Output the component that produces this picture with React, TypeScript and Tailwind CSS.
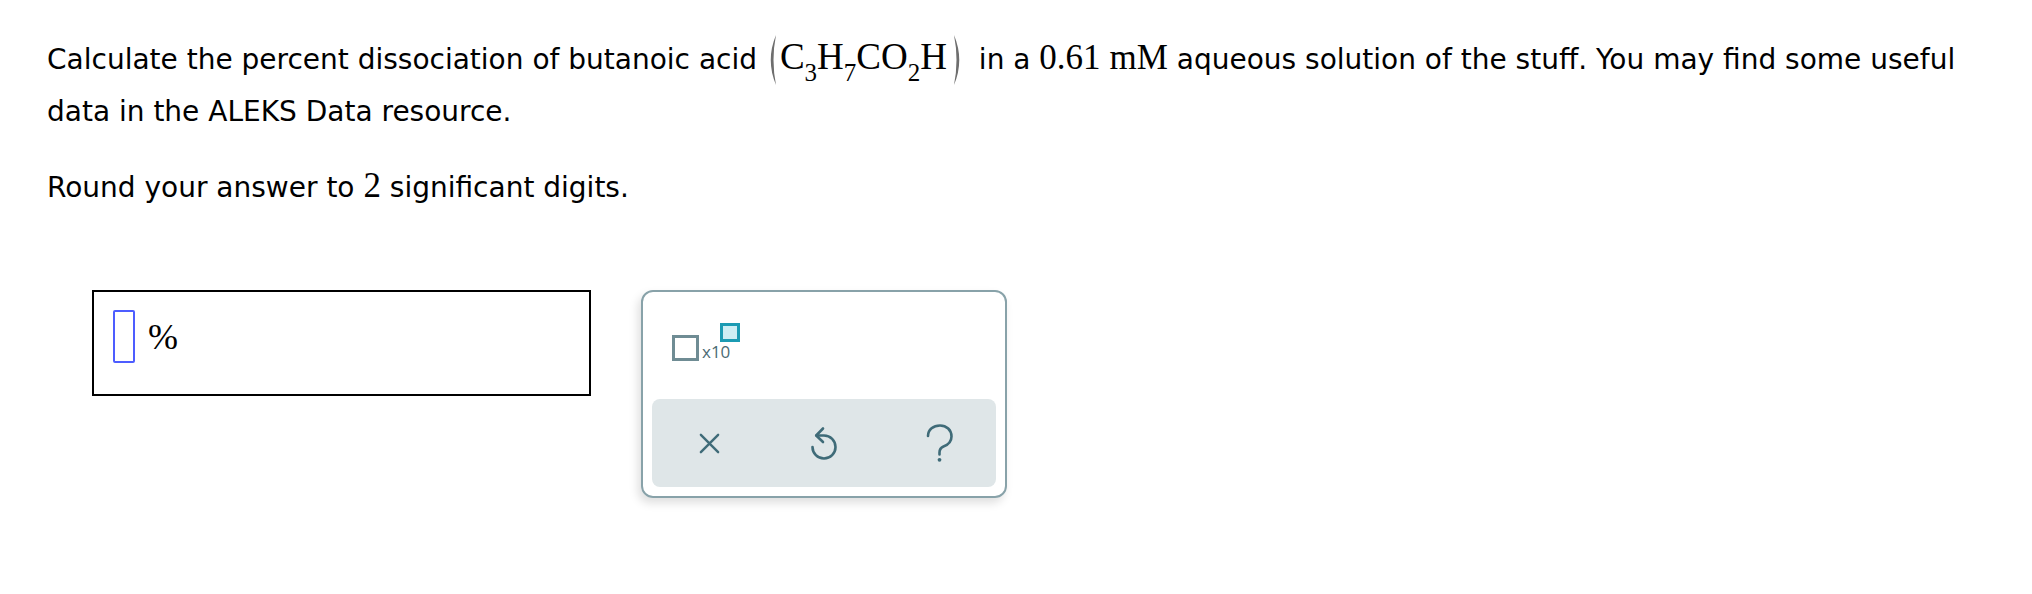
import React from "react";

function Paren({ right = false }: { right?: boolean }) {
  return (
    <svg
      viewBox="0 0 12 52"
      className={`inline-block w-[12px] h-[52px] align-[-17px] ${right ? "ml-[5px] mr-[6px]" : "mr-[2px]"}`}
    >
      {right ? (
        <path d="M2 1 Q12.5 26 2 51 Q7 26 2 1 Z" fill="#6e6e6e" />
      ) : (
        <path d="M10 1 Q-0.5 26 10 51 Q5 26 10 1 Z" fill="#6e6e6e" />
      )}
    </svg>
  );
}

function Sub({ children }: { children: React.ReactNode }) {
  return <span className="text-[25px] relative top-[12px]">{children}</span>;
}

function Formula() {
  return (
    <span className="font-['Liberation_Serif',serif] text-[37px] leading-none whitespace-nowrap">
      <Paren />
      C<Sub>3</Sub>H<Sub>7</Sub>CO<Sub>2</Sub>H
      <Paren right />
    </span>
  );
}

function M({ children }: { children: React.ReactNode }) {
  return <span className="font-['Liberation_Serif',serif] text-[35px] leading-none">{children}</span>;
}

function XIcon() {
  return (
    <svg viewBox="0 0 24 24" className="w-[25px] h-[23px]" fill="none" stroke="#3f6b78" strokeWidth="2.5" strokeLinecap="round">
      <path d="M3 3 L21 21 M21 3 L3 21" />
    </svg>
  );
}

function UndoIcon() {
  return (
    <svg viewBox="0 0 28 36" className="w-[28px] h-[36px]" fill="none" stroke="#3f6b78" strokeWidth="2.6" strokeLinecap="round" strokeLinejoin="round">
      <path d="M6.5 10.5 L14 10.5 A11.5 11.5 0 1 1 2.5 22" />
      <path d="M13 3.5 L6.2 10.5 L13 17" />
    </svg>
  );
}

function HelpIcon() {
  return (
    <svg viewBox="0 0 28 38" className="w-[28px] h-[38px]" fill="none" stroke="#3f6b78" strokeWidth="2.6" strokeLinecap="round">
      <path d="M3 12 C3 5.5 8.5 1.5 15 1.5 C21.5 1.5 26.5 6 26.5 12.5 C26.5 18 22.5 21 18.5 22.5 C15.5 23.8 14.5 25.5 14.5 28.5 V30.5" />
      <circle cx="14.5" cy="35.8" r="1.9" fill="#3f6b78" stroke="none" />
    </svg>
  );
}

export default function App() {
  return (
    <div className="w-[2032px] h-[594px] bg-white text-black font-['DejaVu_Sans',sans-serif] text-[28px] pl-[47px] pt-[34px] overflow-hidden">
      <p className="leading-[52px] w-[1960px]">
        Calculate the percent dissociation of butanoic acid <Formula /> in a <M>0.61</M> <M>mM</M> aqueous solution of the
        stuff. You may find some useful data in the ALEKS Data resource.
      </p>
      <p className="mt-[24px] leading-[52px]">
        Round your answer to <M>2</M> significant digits.
      </p>
      <div className="mt-[76px] ml-[45px] flex items-start gap-[50px]">
        <div className="w-[499px] h-[106px] border-2 border-black flex items-start pl-[19px] pt-[18px]">
          <div className="flex items-center">
            <div className="w-[22px] h-[53px] border-2 border-[#4d5dff] rounded-[2px]" />
            <span className="ml-[13px] font-['Liberation_Serif',serif] text-[36px] leading-none">%</span>
          </div>
        </div>
        <div className="w-[366px] h-[208px] border-2 border-[#88a2a9] rounded-[12px] flex flex-col shadow-[-3px_5px_10px_rgba(0,0,0,0.13)]">
          <div className="ml-[29px] mt-[31px] flex items-end">
            <div className="w-[27px] h-[26px] border-[3px] border-[#6f8c94]" />
            <div className="ml-[3px] flex flex-col">
              <div className="ml-[18px] w-[20px] h-[19px] border-[3px] border-[#1b9bb3] bg-[#cdeef4]" />
              <span className="mt-[1px] font-['Open_Sans',sans-serif] text-[17px] leading-[18px] text-[#4b6a73]">x10</span>
            </div>
          </div>
          <div className="mt-auto mx-[9px] mb-[9px] h-[88px] bg-[#dfe6e8] rounded-[8px] flex">
            <div className="flex-1 flex items-center justify-center">
              <XIcon />
            </div>
            <div className="flex-1 flex items-center justify-center">
              <UndoIcon />
            </div>
            <div className="flex-1 flex items-center justify-center">
              <HelpIcon />
            </div>
          </div>
        </div>
      </div>
    </div>
  );
}
